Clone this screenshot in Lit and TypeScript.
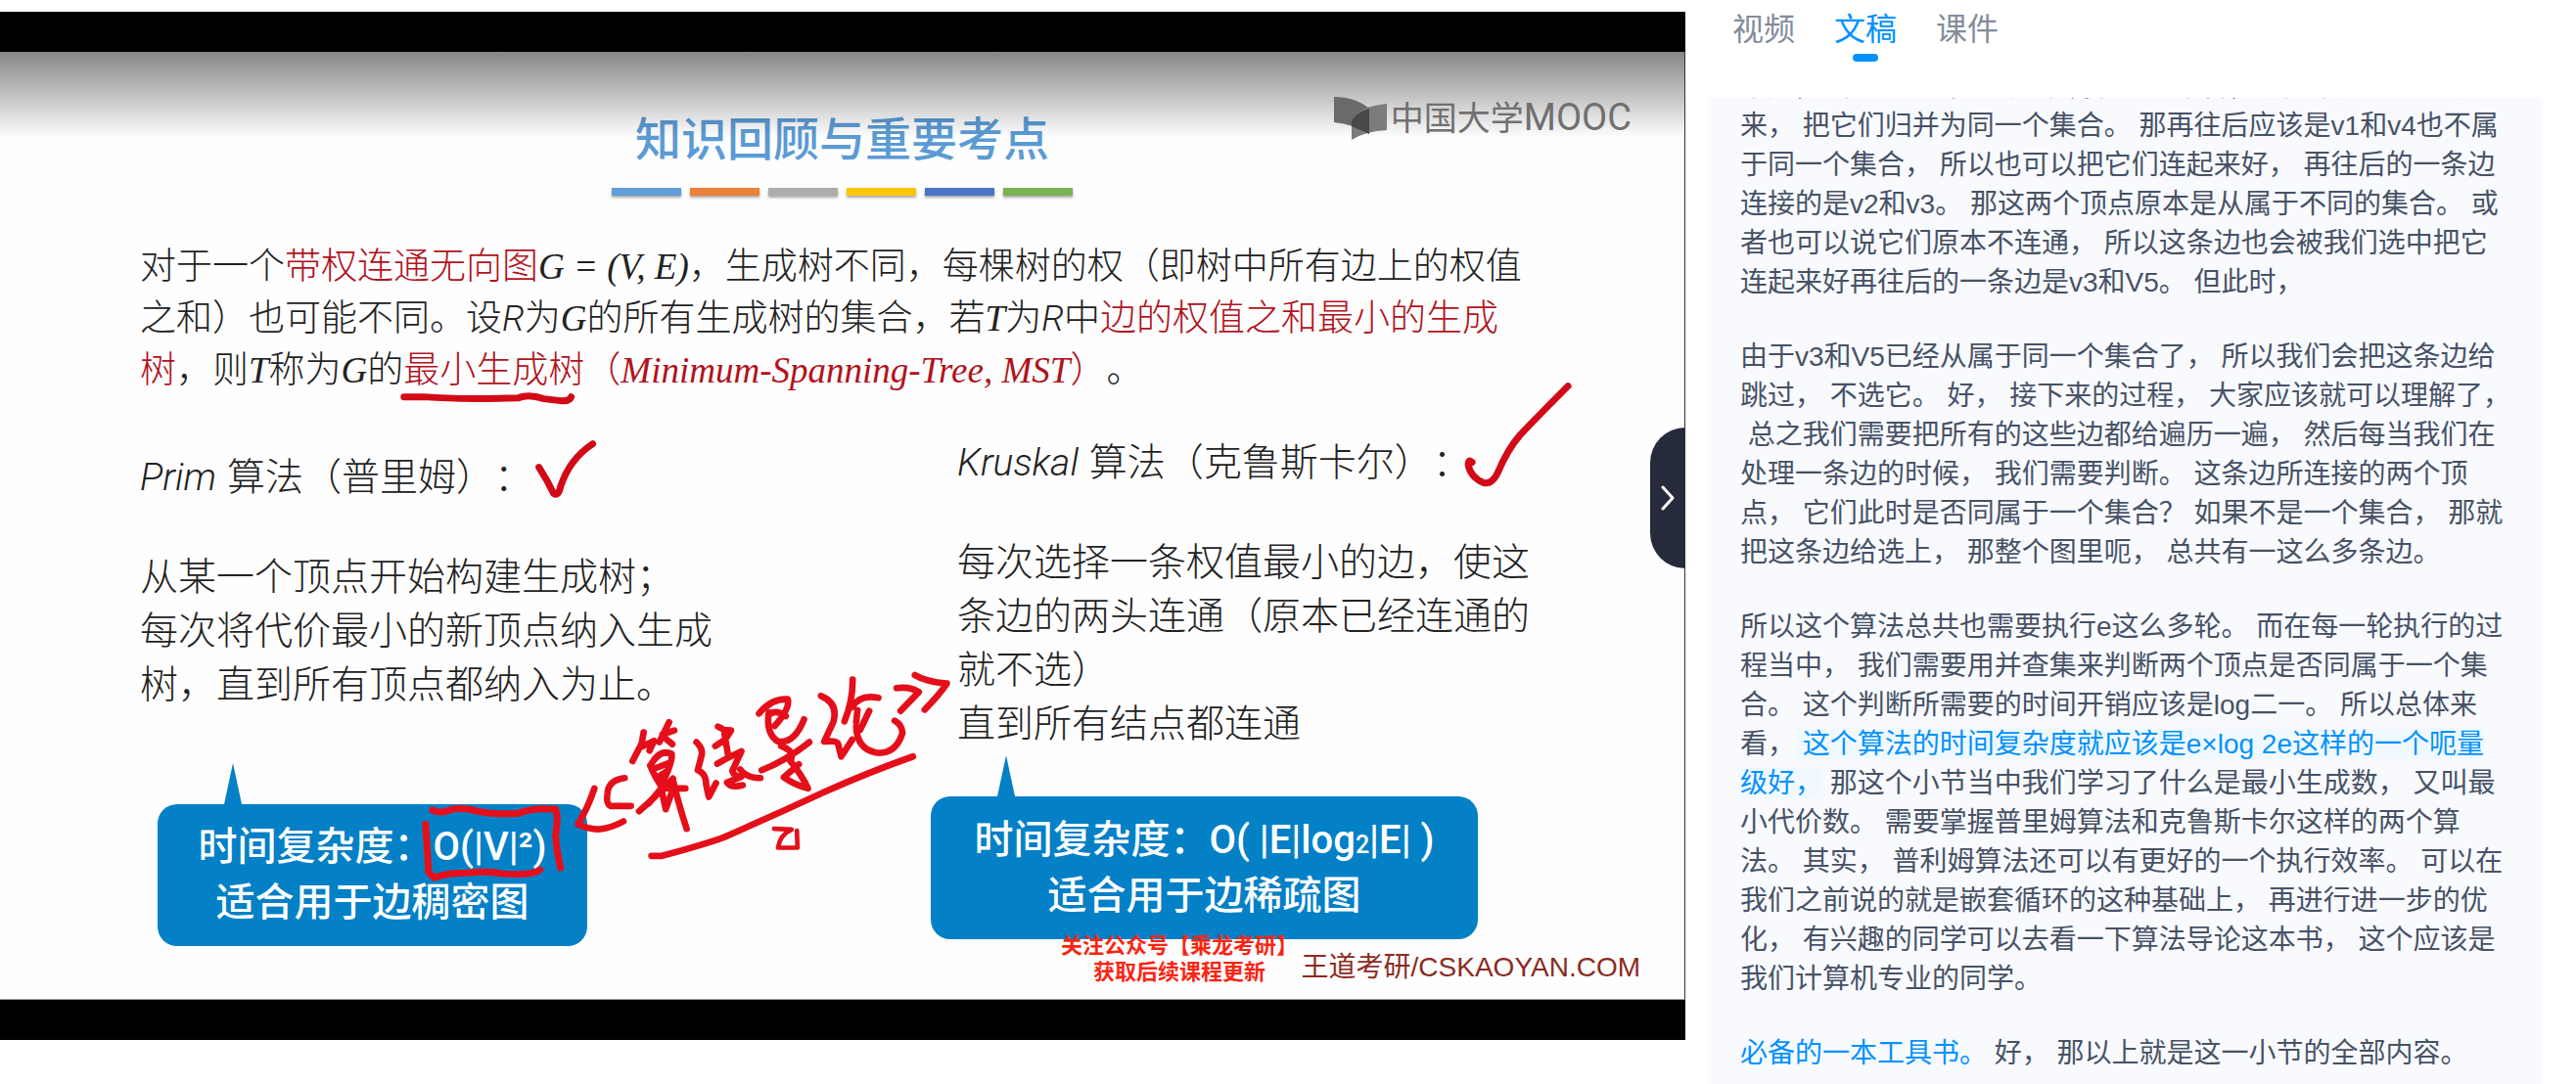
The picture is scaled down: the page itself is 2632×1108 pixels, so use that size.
import { LitElement, html, css, svg } from "lit";
import { customElement, state } from "lit/decorators.js";

type Run = string | { hl: string } | { link: string };
type Line = Run[];

const TABS = ["视频", "文稿", "课件"];

const TRANSCRIPT: Line[][] = [
  [
    ["不是， 那这个V1和v4 是不属于同一集合， 所以我们就把它连"],
    ["来， 把它们归并为同一个集合。 那再往后应该是v1和v4也不属"],
    ["于同一个集合， 所以也可以把它们连起来好， 再往后的一条边"],
    ["连接的是v2和v3。 那这两个顶点原本是从属于不同的集合。 或"],
    ["者也可以说它们原本不连通， 所以这条边也会被我们选中把它"],
    ["连起来好再往后的一条边是v3和V5。 但此时，"],
  ],
  [
    ["由于v3和V5已经从属于同一个集合了， 所以我们会把这条边给"],
    ["跳过， 不选它。 好， 接下来的过程， 大家应该就可以理解了，"],
    [" 总之我们需要把所有的这些边都给遍历一遍， 然后每当我们在"],
    ["处理一条边的时候， 我们需要判断。 这条边所连接的两个顶"],
    ["点， 它们此时是否同属于一个集合？ 如果不是一个集合， 那就"],
    ["把这条边给选上， 那整个图里呃， 总共有一这么多条边。"],
  ],
  [
    ["所以这个算法总共也需要执行e这么多轮。 而在每一轮执行的过"],
    ["程当中， 我们需要用并查集来判断两个顶点是否同属于一个集"],
    ["合。 这个判断所需要的时间开销应该是log二一。 所以总体来"],
    ["看，", { hl: " 这个算法的时间复杂度就应该是e×log 2e这样的一个呃量" }],
    [{ hl: "级好，" }, " 那这个小节当中我们学习了什么是最小生成数， 又叫最"],
    ["小代价数。 需要掌握普里姆算法和克鲁斯卡尔这样的两个算"],
    ["法。 其实， 普利姆算法还可以有更好的一个执行效率。 可以在"],
    ["我们之前说的就是嵌套循环的这种基础上， 再进行进一步的优"],
    ["化， 有兴趣的同学可以去看一下算法导论这本书， 这个应该是"],
    ["我们计算机专业的同学。"],
  ],
  [[{ link: "必备的一本工具书。" }, " 好， 那以上就是这一小节的全部内容。"]],
];

@customElement("lecture-ink")
class LectureInk extends LitElement {
  static styles = css`
    :host { display: block; pointer-events: none; }
    .ink { display: block; width: 100%; height: 100%; }
    .stroke { fill: none; stroke: #e50f1b; stroke-linecap: round; stroke-linejoin: round; }
    .deep { stroke: #d20a18; }
  `;
  render() {
    return html`<svg class="ink" viewBox="0 53 1722 969" preserveAspectRatio="none" aria-hidden="true">
      ${svg`
      <g class="stroke deep" stroke-width="7">
        <path d="M413 406 L434 406 Q470 409 530 407 Q541 403 556 408 L573 410 Q582 411 584 406"/>
        <path d="M551 478 Q560 492 566 505 Q571 508 573 498 Q582 470 606 454"/>
        <path d="M1505 473 Q1501 469 1501 476 Q1504 489 1517 494 Q1525 496 1531 484 Q1541 460 1554 445 Q1577 421 1603 395"/>
      </g>
      <g class="stroke" stroke-width="7">
        <path d="M435 843 Q437 870 438 892 Q441 896 444 898 Q455 893 478 893 Q500 891 513 894 Q545 896 552 890"/>
        <path d="M442 829 Q452 833 462 828 Q475 826 488 830 Q510 834 530 832 Q545 826 568 828 Q571 835 568 855 Q569 872 573 888"/>
      </g>
      <g class="stroke" stroke-width="20" transform="translate(560 660) scale(0.33333)">
        <path d="M143 440 Q125 495 93 550 Q140 572 178 562 Q212 553 232 541"/>
        <path d="M236 408 Q186 414 183 455 Q178 488 193 494 L255 494"/>
        <path d="M294 268 L288 302 L260 356 M288 312 L326 294 L312 324"/>
        <path d="M372 237 L342 298 M352 274 L388 262 M358 284 L382 304"/>
        <path d="M314 370 Q330 408 350 436 M318 364 Q345 318 380 334 Q384 358 350 426 M330 378 L372 362 M340 404 L368 386"/>
        <path d="M280 510 Q322 474 384 410 M310 486 L348 440 L422 440 M348 440 L362 504 L378 458 M384 414 Q400 484 426 564"/>
        <path d="M456 298 Q476 316 472 338 L460 384 Q486 394 486 430 L494 466 L516 424"/>
        <path d="M522 250 L540 260 L562 262 L544 290 L514 310 M542 272 L554 344 M520 364 L556 344 L594 326 L566 386 Q574 406 594 404 L550 422 Q562 440 598 430 M590 382 Q610 408 652 408"/>
        <path d="M648 210 Q684 164 736 166 Q744 194 696 248 M678 214 Q700 196 730 218 M678 206 Q668 272 706 296 Q756 304 786 228"/>
        <path d="M656 384 Q736 352 802 298 M716 310 Q760 326 744 356 Q780 400 798 440 Q758 430 724 406 L770 366"/>
        <path d="M838 156 Q892 178 876 236 L848 296 Q884 292 890 302 L900 342 L934 290"/>
        <path d="M935 106 Q936 170 910 234 M934 190 Q958 150 1014 162 M950 200 L946 236 M986 202 L958 260 L946 250 Q948 318 1006 330 Q1066 338 1088 270 Q1086 244 1064 232"/>
        <path d="M1070 132 Q1110 126 1138 144 L1082 202"/>
        <path d="M1126 92 Q1160 112 1224 118 Q1200 154 1156 198"/>
        <path d="M318 647 L350 647 Q480 612 540 590 Q700 520 850 450 Q990 388 1120 342"/>
        <path d="M694 564 L748 566 Q712 582 706 622 L766 622 L764 570" stroke-width="14"/>
      </g>`}
    </svg>`;
  }
}

@customElement("lecture-slide")
class LectureSlide extends LitElement {
  static styles = css`
    :host {
      display: block;
      position: relative;
      box-sizing: border-box;
      height: 969px;
      overflow: hidden;
      background: #fefefe;
      border-right: 1px solid #333;
      border-bottom: 1px solid #999;
      color: #222;
      font-family: "Liberation Sans", "Noto Sans CJK SC", sans-serif;
      font-weight: 300;
      white-space: nowrap;
      text-spacing-trim: space-all;
    }
    .shade {
      position: absolute;
      inset: 0 0 auto 0;
      height: 88px;
      background: linear-gradient(rgba(0, 0, 0, 0.47), rgba(0, 0, 0, 0.24) 50%, rgba(0, 0, 0, 0));
    }
    .brand {
      position: absolute;
      top: 43px;
      right: 54px;
      display: flex;
      align-items: center;
      gap: 4px;
      color: #707070;
      font: 400 34px/46px "Noto Sans CJK SC", sans-serif;
    }
    .brand svg { width: 54px; height: 46px; }
    .latin { font-family: Roboto, sans-serif; font-size: 38px; }
    .title {
      margin: 0;
      padding-top: 58px;
      text-align: center;
      color: #5b9bd5;
      font: 500 47px/56px "Noto Sans CJK SC", sans-serif;
    }
    .bars { display: flex; justify-content: center; gap: 9px; margin-top: 25px; }
    .bar { width: 71px; height: 8px; box-shadow: 0 2px 3px rgba(0, 0, 0, 0.35); }
    .b1 { background: #609fd8; }
    .b2 { background: #ec8138; }
    .b3 { background: #adadad; }
    .b4 { background: #fcc60a; }
    .b5 { background: #4a75c6; }
    .b6 { background: #78b255; }
    .intro { margin: 46px 0 0; padding-left: 143px; font-size: 37px; line-height: 53px; }
    .row { display: block; }
    .red { color: #b1121c; }
    i { font-family: Roboto, "Liberation Sans", sans-serif; }
    .serif { font-family: "Liberation Serif", serif; font-style: italic; }
    .algos { display: grid; grid-template-columns: 835fr 743fr; padding-left: 143px; align-items: start; }
    .algo { margin: 0; font-size: 39px; line-height: 55px; }
    .algo h2 { margin: 0 0 46px; font: inherit; }
    .algo p { margin: 0; }
    .prim { padding-top: 55px; }
    .kruskal { padding-top: 40px; }
    .callout {
      position: relative;
      box-sizing: border-box;
      border-radius: 20px;
      background: #0480c6;
      color: #fff;
      text-align: center;
      font: 500 40px/57px Roboto, "Noto Sans CJK SC", sans-serif;
    }
    .callout::before {
      content: "";
      position: absolute;
      bottom: 100%;
      left: 68px;
      width: 18px;
      height: 42px;
      background: inherit;
      clip-path: polygon(50% 0, 100% 100%, 0 100%);
    }
    .dense { width: 439px; margin: 95px 0 0 18px; padding: 15px 0 16px; }
    .sparse { width: 559px; margin: 47px 0 0 -27px; padding: 16px 0; }
    .small { font-size: 25px; line-height: 1px; }
    .promo {
      position: absolute;
      left: 1084px;
      top: 898px;
      text-align: center;
      color: #fb2413;
      font: 700 22px/27px "Noto Sans CJK SC", sans-serif;
    }
    .site { position: absolute; right: 45px; bottom: 12px; color: #8c2a1f; font-size: 28px; line-height: 40px; font-weight: 400; }
    .ink { position: absolute; inset: 0; }
  `;
  render() {
    return html`
      <div class="shade"></div>
      <div class="brand">
        <svg viewBox="0 0 54 46" aria-hidden="true">
          <path d="M0 2 Q22 2 36 14 V40 Q20 30 0 28 Z" fill="#6a6a6a" />
          <path d="M18 46 V26 Q24 12 54 9 V36 Q32 37 18 46 Z" fill="#7c7c7c" />
          <path d="M18 32 V26 Q24 17 36 14 V40 Z" fill="#484848" />
        </svg>
        <span>中国大学<span class="latin">MOOC</span></span>
      </div>
      <h1 class="title">知识回顾与重要考点</h1>
      <div class="bars">${[1, 2, 3, 4, 5, 6].map((n) => html`<span class="bar b${n}"></span>`)}</div>
      <p class="intro">
        <span class="row">对于一个<span class="red">带权连通无向图</span><span class="serif">G = (V, E)</span>，生成树不同，每棵树的权（即树中所有边上的权值</span>
        <span class="row">之和）也可能不同。设<i>R</i>为<span class="serif">G</span>的所有生成树的集合，若<span class="serif">T</span>为<i>R</i>中<span class="red">边的权值之和最小的生成</span></span>
        <span class="row"><span class="red">树</span>，则<span class="serif">T</span>称为<span class="serif">G</span>的<span class="red">最小生成树（<span class="serif">Minimum-Spanning-Tree, MST</span>）</span>。</span>
      </p>
      <div class="algos">
        <section class="algo prim">
          <h2><i>Prim</i> 算法（普里姆）：</h2>
          <p>从某一个顶点开始构建生成树；<br />每次将代价最小的新顶点纳入生成<br />树，直到所有顶点都纳入为止。</p>
          <div class="callout dense">时间复杂度：O(|V|²)<br />适合用于边稠密图</div>
        </section>
        <section class="algo kruskal">
          <h2><i>Kruskal</i> 算法（克鲁斯卡尔）：</h2>
          <p>每次选择一条权值最小的边，使这<br />条边的两头连通（原本已经连通的<br />就不选）<br />直到所有结点都连通</p>
          <div class="callout sparse">时间复杂度：O( |E|log<span class="small">2</span>|E| )<br />适合用于边稀疏图</div>
        </section>
      </div>
      <div class="promo">关注公众号【乘龙考研】<br />获取后续课程更新</div>
      <div class="site">王道考研/CSKAOYAN.COM</div>
      <lecture-ink class="ink"></lecture-ink>
    `;
  }
}

@customElement("lecture-transcript")
class LectureTranscript extends LitElement {
  static styles = css`
    :host {
      display: flex;
      flex-direction: column;
      justify-content: flex-end;
      overflow: hidden;
      box-sizing: border-box;
      padding: 0 32px 11px;
      background: #f8fafe;
      color: #475266;
      font: 400 28px/40px "Liberation Sans", "Noto Sans CJK SC", sans-serif;
      text-spacing-trim: space-all;
    }
    .para { margin: 36px 0 0; }
    .line { display: block; white-space: pre; }
    .link { color: #0091ff; text-decoration: none; }
    .hl { background: #f0f9ff; }
  `;
  private run(r: Run) {
    if (typeof r === "string") return r;
    if ("hl" in r) return html`<a class="link hl" href="#">${r.hl}</a>`;
    return html`<a class="link" href="#">${r.link}</a>`;
  }
  render() {
    return TRANSCRIPT.map(
      (p) => html`<p class="para">${p.map((l) => html`<span class="line">${l.map((r) => this.run(r))}</span>`)}</p>`
    );
  }
}

@customElement("app-root")
class AppRoot extends LitElement {
  @state() private active = 1;

  static styles = css`
    :host { display: block; background: #fff; }
    .page {
      display: grid;
      grid-template-columns: minmax(0, 1722fr) minmax(0, 852fr);
      grid-template-rows: minmax(0, 1fr);
      column-gap: 24px;
      padding-right: 34px;
      box-sizing: border-box;
      height: 100vh;
    }
    .video { position: relative; align-self: start; margin-top: 12px; padding: 41px 0; background: #000; }
    .toggle {
      position: absolute;
      right: 0;
      top: 425px;
      width: 36px;
      height: 144px;
      padding: 0;
      border: 0;
      border-radius: 36px 0 0 36px;
      background: #252b3a;
      display: grid;
      place-items: center;
    }
    .toggle svg { width: 16px; height: 26px; }
    .side { display: flex; flex-direction: column; min-width: 0; min-height: 0; }
    .tabs { display: flex; gap: 40px; height: 100px; flex: none; box-sizing: border-box; padding: 3px 0 0 24px; align-items: flex-start; }
    .tab {
      display: flex;
      flex-direction: column;
      align-items: center;
      gap: 4px;
      padding: 0;
      border: 0;
      background: none;
      color: #828c9c;
      font: 400 32px/48px "Noto Sans CJK SC", sans-serif;
    }
    .tab.on { color: #0091ff; }
    .tab.on::after { content: ""; width: 26px; height: 8px; border-radius: 4px; background: #0091ff; }
    .transcript { flex: 1; min-height: 0; }
  `;
  render() {
    return html`
      <main class="page">
        <div class="video">
          <lecture-slide></lecture-slide>
          <button class="toggle" aria-label="收起">
            <svg viewBox="0 0 16 26" aria-hidden="true"><path d="M3 2 L13 13 L3 24" fill="none" stroke="#fff" stroke-width="3" stroke-linecap="round" stroke-linejoin="round" /></svg>
          </button>
        </div>
        <div class="side">
          <nav class="tabs">
            ${TABS.map(
              (t, i) => html`<button class="tab ${i === this.active ? "on" : ""}" @click=${() => (this.active = i)}>${t}</button>`
            )}
          </nav>
          <lecture-transcript class="transcript"></lecture-transcript>
        </div>
      </main>
    `;
  }
}
